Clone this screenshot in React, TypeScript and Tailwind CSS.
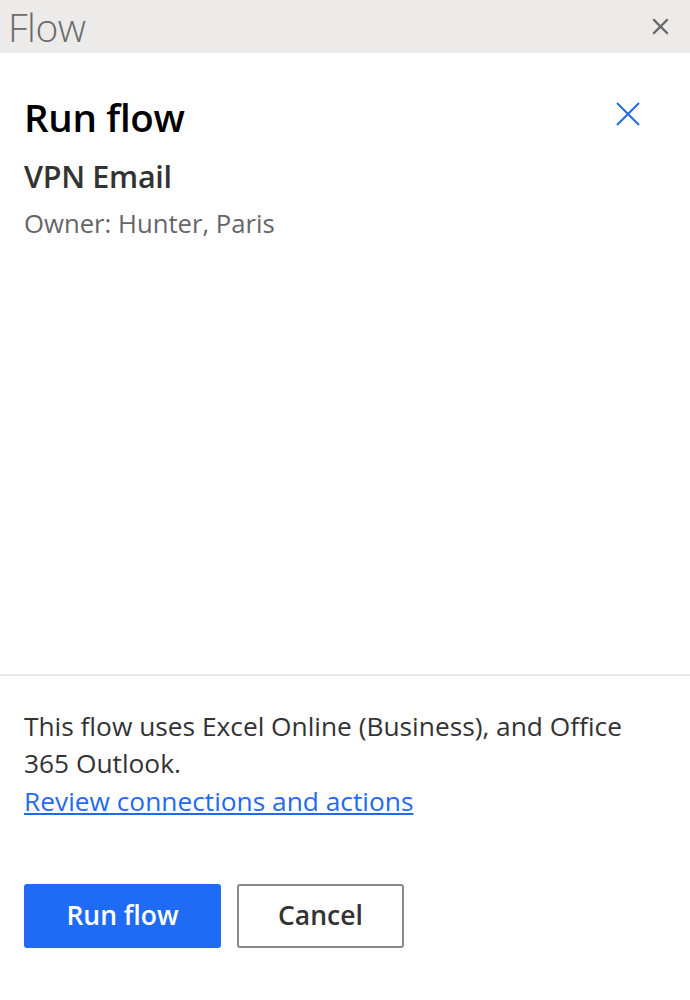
import React from "react";

export default function App() {
  return (
    <div
      className="w-[690px] h-[1000px] bg-white flex flex-col overflow-hidden"
      style={{ fontFamily: '"Open Sans", "Noto Sans", sans-serif' }}
    >
      <div className="h-[53px] bg-[#ecebe9] flex items-center justify-between pl-[8px] pr-[21px] shrink-0">
        <span className="text-[39px] font-light text-[#6b6b6b] leading-none tracking-[-0.5px]">Flow</span>
        <svg width="17" height="17" viewBox="0 0 18 18">
          <path d="M2 2 L16 16 M16 2 L2 16" stroke="#6b6b6b" strokeWidth="2.4" strokeLinecap="round" />
        </svg>
      </div>

      <div className="flex-1 flex flex-col px-[24px] pt-[40px]">
        <div className="flex items-start justify-between">
          <h1 className="text-[38.5px] font-semibold text-black leading-[48px] tracking-[-0.3px]">Run flow</h1>
          <svg width="28" height="28" viewBox="0 0 28 28" className="mt-[7px] mr-[24px]">
            <path d="M3 3 L25 25 M25 3 L3 25" stroke="#2269e8" strokeWidth="2" />
          </svg>
        </div>
        <div className="mt-[15px] text-[30.5px] font-semibold text-[#333] leading-[40px] tracking-[-0.3px]">VPN Email</div>
        <div className="mt-[10px] text-[25.7px] text-[#666] leading-[36px]">Owner: Hunter, Paris</div>
      </div>

      <div className="h-[2px] bg-[#e8e8e8] shrink-0" />

      <div className="px-[24px] pt-[32px] pb-[52px] shrink-0">
        <p className="text-[26.3px] text-[#333] leading-[37.5px]">
          This flow uses Excel Online (Business), and Office 365 Outlook.
        </p>
        <a href="#" className="text-[26.3px] text-[#1f6bf0] underline leading-[37.5px] block w-fit">
          Review connections and actions
        </a>
        <div className="flex gap-[16px] mt-[64px]">
          <button className="w-[197px] h-[64px] bg-[#1f6bf6] text-white text-[26.5px] font-[560] rounded-[3px]">
            Run flow
          </button>
          <button className="w-[167px] h-[64px] bg-white border-2 border-[#8a8a8a] text-[#333] text-[26.5px] font-[560] rounded-[3px]">
            Cancel
          </button>
        </div>
      </div>
    </div>
  );
}
